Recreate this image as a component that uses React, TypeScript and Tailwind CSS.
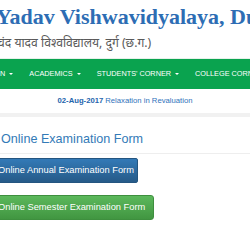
import React from "react";

function Caret() {
  return (
    <span className="ml-[4px] inline-block h-0 w-0 border-x-[2.5px] border-t-[2.5px] border-x-transparent border-t-white align-middle" />
  );
}

export default function App() {
  const navItems = ["N", "ACADEMICS", "STUDENTS' CORNER", "COLLEGE CORNER"];
  return (
    <div className="h-[250px] w-[250px] overflow-hidden bg-white" style={{ fontFamily: '"Liberation Sans", Arial, sans-serif' }}>
      {/* Header */}
      <div className="h-[59px] border-b border-[#e6f2ea] pt-[4px]">
        <div
          className="-ml-[4px] whitespace-nowrap text-[22px] font-bold leading-[26px] text-[#2d6db4]"
          style={{ fontFamily: '"Liberation Serif", "Times New Roman", serif' }}
        >
          Yadav Vishwavidyalaya, Durg
        </div>
        <div
          className="-ml-[3px] mt-[3px] whitespace-nowrap text-[12.2px] leading-[20px] text-[#5a5a5a]"
          style={{ fontFamily: '"Noto Sans", "Liberation Serif", serif' }}
        >
          चंद यादव विश्वविद्यालय, दुर्ग (छ.ग.)
        </div>
      </div>

      {/* Nav */}
      <div className="-ml-[8px] flex h-[30px] items-center whitespace-nowrap bg-[#0aa34f] text-[7.3px] text-white">
        {navItems.map((t) => (
          <div key={t} className="flex items-center px-[8px]">
            <span>{t}</span>
            <Caret />
          </div>
        ))}
      </div>

      {/* Announcement */}
      <div className="flex h-[24px] items-center justify-center text-[7.7px] text-[#2f72bb]">
        <span className="font-bold text-[#2464ad]">02-Aug-2017</span>
        <span className="ml-[2px]">Relaxation in Revaluation</span>
      </div>
      <div className="h-[4px] bg-[#f1f1f1]" />

      {/* Heading */}
      <div className="mt-[14px] border-b border-[#eeeeee] pb-[6px] pl-[1px] text-[12.6px] leading-[16px] text-[#337ab7]">
        Online Examination Form
      </div>

      {/* Buttons */}
      <div className="-ml-[11px] mt-[4px] flex flex-col items-start gap-[12px]">
        <div className="flex h-[25px] items-center rounded-[2px] border border-[#245580] bg-gradient-to-b from-[#337ab7] to-[#265a88] pl-[8px] pr-[3px] text-[9.3px] text-white">
          Online Annual Examination Form
        </div>
        <div className="flex h-[25px] items-center rounded-[3px] border border-[#3e8f3e] bg-gradient-to-b from-[#5cb85c] to-[#419641] px-[8px] text-[9.3px] text-white">
          Online Semester Examination Form
        </div>
      </div>
    </div>
  );
}
